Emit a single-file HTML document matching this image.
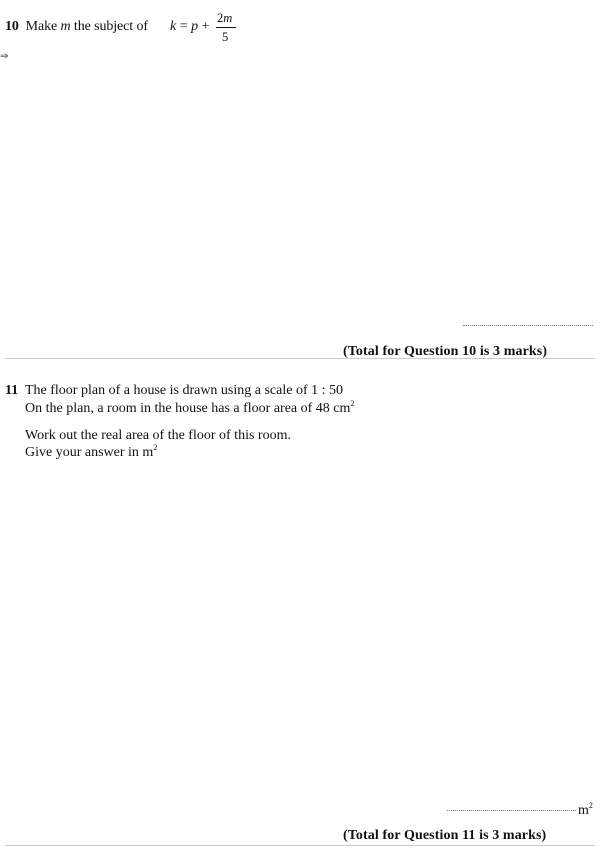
<!DOCTYPE html><html><head><style>
body{margin:0;width:601px;height:850px;background:#fff;font-family:"Liberation Serif",serif;font-size:14px;color:#111;position:relative;overflow:hidden}
.a{position:absolute;white-space:nowrap;line-height:1}
b{font-weight:bold}
.dot{position:absolute;border-top:1px dotted #777;height:0}
.hr{position:absolute;left:5px;width:590px;border-top:1.5px solid #ccc}
sup{font-size:8px;vertical-align:6px}
</style></head><body>
<div class="a" style="left:5px;top:20px;letter-spacing:-0.1px"><b>10</b>&nbsp; Make <i>m</i> the subject of</div>
<div class="a" style="left:170px;top:20px"><i>k</i> = <i>p</i> +</div>
<div class="a" style="left:217px;top:12px;font-size:12.5px">2<i>m</i></div>
<div style="position:absolute;left:216px;top:27px;width:20px;border-top:1px solid #111"></div>
<div class="a" style="left:222px;top:31px;font-size:12.5px">5</div>
<div class="a" style="left:0;top:52px;font-size:10px;color:#444">&#8658;</div>
<div class="dot" style="left:463px;top:325px;width:130px"></div>
<div class="a" style="left:343px;top:345px;letter-spacing:0.1px"><b>(Total for Question 10 is 3 marks)</b></div>
<div class="hr" style="top:358px"></div>
<div class="a" style="left:5px;top:384px"><b>11</b>&nbsp; The floor plan of a house is drawn using a scale of 1 : 50</div>
<div class="a" style="left:25px;top:400px">On the plan, a room in the house has a floor area of 48 cm<sup>2</sup></div>
<div class="a" style="left:25px;top:429px">Work out the real area of the floor of this room.</div>
<div class="a" style="left:25px;top:444px">Give your answer in m<sup>2</sup></div>
<div class="dot" style="left:447px;top:810px;width:129px"></div>
<div class="a" style="left:578px;top:802px">m<sup>2</sup></div>
<div class="a" style="left:343px;top:829px;letter-spacing:0.1px"><b>(Total for Question 11 is 3 marks)</b></div>
<div class="hr" style="top:845px"></div>
</body></html>
